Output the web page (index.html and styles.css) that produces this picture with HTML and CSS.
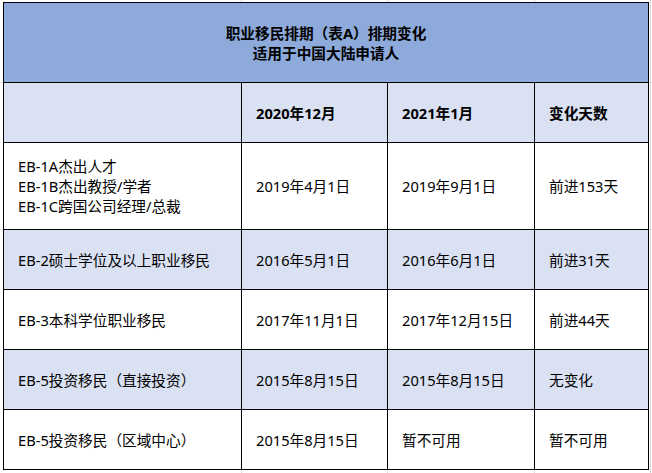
FILE: index.html
```html
<!DOCTYPE html>
<html lang="zh-CN">
<head>
<meta charset="utf-8">
<title>职业移民排期（表A）排期变化</title>
<link rel="stylesheet" href="styles.css">
</head>
<body>
<div class="sheet">
  <div class="grid">
    <div class="cell title">职业移民排期（表A）排期变化<br>适用于中国大陆申请人</div>

    <div class="cell head"></div>
    <div class="cell head">2020年12月</div>
    <div class="cell head">2021年1月</div>
    <div class="cell head">变化天数</div>

    <div class="cell">EB-1A杰出人才<br>EB-1B杰出教授/学者<br>EB-1C跨国公司经理/总裁</div>
    <div class="cell">2019年4月1日</div>
    <div class="cell">2019年9月1日</div>
    <div class="cell">前进153天</div>

    <div class="cell alt">EB-2硕士学位及以上职业移民</div>
    <div class="cell alt">2016年5月1日</div>
    <div class="cell alt">2016年6月1日</div>
    <div class="cell alt">前进31天</div>

    <div class="cell">EB-3本科学位职业移民</div>
    <div class="cell">2017年11月1日</div>
    <div class="cell">2017年12月15日</div>
    <div class="cell">前进44天</div>

    <div class="cell alt">EB-5投资移民（直接投资）</div>
    <div class="cell alt">2015年8月15日</div>
    <div class="cell alt">2015年8月15日</div>
    <div class="cell alt">无变化</div>

    <div class="cell">EB-5投资移民（区域中心）</div>
    <div class="cell">2015年8月15日</div>
    <div class="cell">暂不可用</div>
    <div class="cell">暂不可用</div>
  </div>
</div>
</body>
</html>
```
FILE: styles.css
```css
html, body {
  margin: 0;
  padding: 0;
}
body {
  width: 652px;
  height: 473px;
  overflow: hidden;
  background-color: #ffffff;
  background-image:
    linear-gradient(#dadada, #dadada),
    linear-gradient(#dadada, #dadada),
    linear-gradient(#dadada, #dadada),
    linear-gradient(#dadada, #dadada),
    linear-gradient(#dadada, #dadada),
    linear-gradient(#dadada, #dadada);
  background-repeat: no-repeat;
  background-size: 1px 100%, 1px 100%, 1px 100%, 1px 100%, 100% 1px, 100% 1px;
  background-position: 241px 0, 387px 0, 534px 0, 650px 0, 0 82px, 0 229px;
  font-family: "Noto Sans", "Noto Sans CJK SC", sans-serif;
  font-size: 14.67px;
  line-height: 20px;
  color: #000;
}
.sheet {
  padding: 2px 0 0 3px;
}
.grid {
  display: grid;
  grid-template-columns: 237px 145px 146px 113px;
  grid-template-rows: 79px 59px 86px 59px 59px 59px 59px;
  gap: 1px;
  width: 644px;
  background: #000;
  border: 1px solid #000;
}
.cell {
  background: #ffffff;
  display: flex;
  align-items: center;
  padding-left: 14px;
}
.title {
  grid-column: 1 / 5;
  background: #8eaadb;
  justify-content: center;
  text-align: center;
  padding-left: 0;
  font-weight: bold;
}
.head {
  background: #d9e1f2;
  font-weight: bold;
}
.alt {
  background: #d9e1f2;
}
```
